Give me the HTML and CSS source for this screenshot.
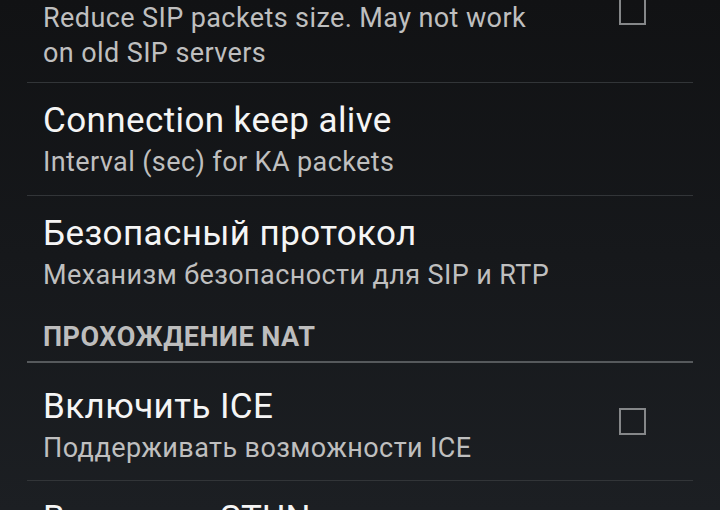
FILE: index.html
```html
<!DOCTYPE html>
<html lang="ru">
<head>
<meta charset="utf-8">
<title>Настройки сети</title>
<link rel="stylesheet" href="styles.css">
</head>
<body>
<div class="screen">
  <div class="list">
    <div class="pref pref--tall">
      <div class="text">
        <div class="title">Use compact SIP</div>
        <div class="summary">Reduce SIP packets size. May not work<br>on old SIP servers</div>
      </div>
      <span class="check"></span>
    </div>
    <div class="pref">
      <div class="text">
        <div class="title">Connection keep alive</div>
        <div class="summary">Interval (sec) for KA packets</div>
      </div>
    </div>
    <div class="pref pref--last">
      <div class="text">
        <div class="title">Безопасный протокол</div>
        <div class="summary">Механизм безопасности для SIP и RTP</div>
      </div>
    </div>
    <div class="category">ПРОХОЖДЕНИЕ NAT</div>
    <div class="pref pref--first">
      <div class="text">
        <div class="title">Включить ICE</div>
        <div class="summary">Поддерживать возможности ICE</div>
      </div>
      <span class="check"></span>
    </div>
    <div class="pref">
      <div class="text">
        <div class="title">Включить STUN</div>
        <div class="summary">Использовать STUN сервер</div>
      </div>
      <span class="check"></span>
    </div>
  </div>
</div>
</body>
</html>
```
FILE: styles.css
```css
html, body {
  margin: 0;
  padding: 0;
}
body {
  width: 720px;
  height: 510px;
  overflow: hidden;
  background: linear-gradient(180deg, #111214 0%, #16181b 50%, #1c1f23 100%);
  font-family: Roboto, "Noto Sans", sans-serif;
}
.screen {
  height: 510px;
  overflow: hidden;
  padding: 0 27px;
}
.list {
  margin-top: -61px;
  display: flex;
  flex-direction: column;
}
.pref {
  display: flex;
  align-items: center;
  padding: 18px 47px 15px 16px;
  border-bottom: 1px solid #323538;
}
.pref--tall {
  padding-bottom: 11px;
}
.pref--last {
  border-bottom: none;
}
.pref--first {
  padding-top: 24px;
  padding-bottom: 14px;
}
.text {
  flex: 1;
  min-width: 0;
}
.title {
  font-size: 35px;
  line-height: 40px;
  letter-spacing: 0.4px;
  color: #f5f5f5;
  white-space: nowrap;
}
.summary {
  margin-top: 4px;
  font-size: 27px;
  line-height: 35px;
  letter-spacing: 0.4px;
  color: #bfbfbf;
  white-space: nowrap;
}
.check {
  flex: none;
  width: 23px;
  height: 23px;
  margin-bottom: 6px;
  border: 2px solid #858789;
}
.pref--first .check {
  margin-bottom: 10px;
}
.category {
  padding: 6px 0 0 16px;
  font-size: 27px;
  line-height: 47px;
  letter-spacing: 0.5px;
  font-weight: bold;
  color: #bdbdbd;
  border-bottom: 2px solid #56595c;
}
```
